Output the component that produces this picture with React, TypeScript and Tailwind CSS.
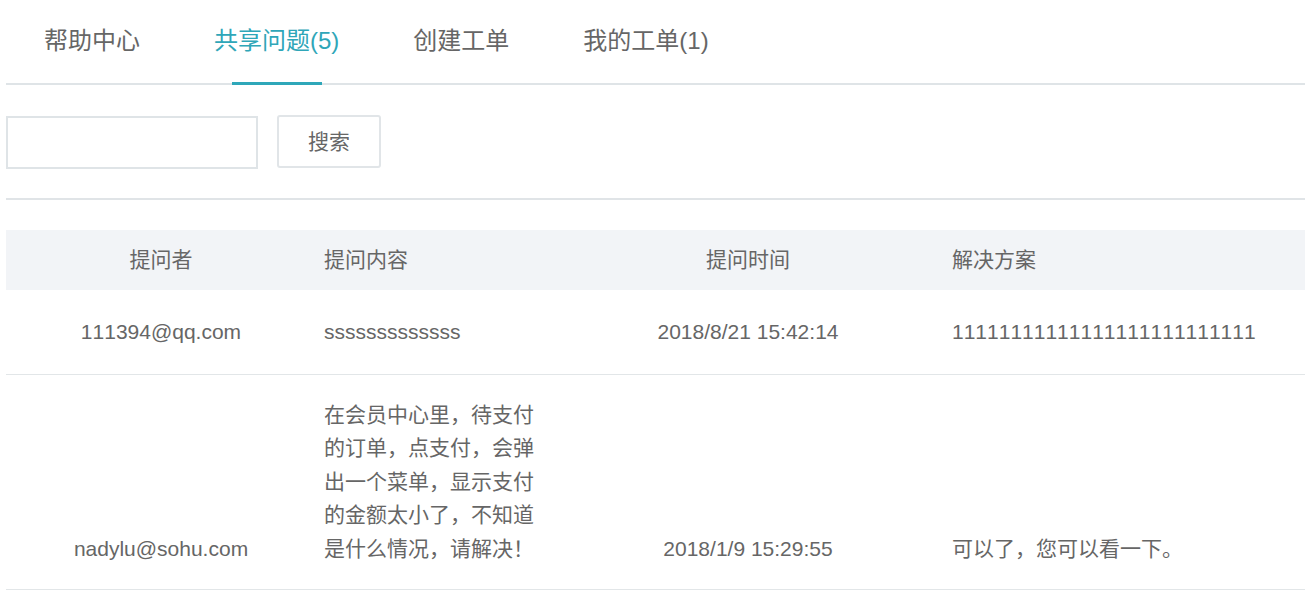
import { useState } from "react";

type Row = {
  user: string;
  content: string;
  time: string;
  solution: string;
};

const tabs = ["帮助中心", "共享问题(5)", "创建工单", "我的工单(1)"];

const rows: Row[] = [
  {
    user: "111394@qq.com",
    content: "sssssssssssss",
    time: "2018/8/21 15:42:14",
    solution: "11111111111111111111111111",
  },
  {
    user: "nadylu@sohu.com",
    content: "在会员中心里，待支付的订单，点支付，会弹出一个菜单，显示支付的金额太小了，不知道是什么情况，请解决！",
    time: "2018/1/9 15:29:55",
    solution: "可以了，您可以看一下。",
  },
];

export default function App() {
  const [active, setActive] = useState(1);
  const [keyword, setKeyword] = useState("");

  return (
    <div className="min-h-screen bg-white pl-[6px] font-['Liberation_Sans','Noto_Sans_CJK_SC',sans-serif] text-[#666] [font-kerning:none]">
      <div className="flex h-[85px] border-b-2 border-[#dfe4e7] pl-[1px]">
        {tabs.map((t, i) => (
          <button
            key={t}
            onClick={() => setActive(i)}
            className={
              "relative flex items-center px-[37px] pb-[2px] text-[24px] " +
              (i === active ? "text-[#2fa6b8]" : "text-[#666]")
            }
          >
            {t}
            {i === active && (
              <span className="absolute bottom-[-2px] left-1/2 h-[3px] w-[90px] -translate-x-1/2 bg-[#2ea7b9]" />
            )}
          </button>
        ))}
      </div>

      <div className="flex items-start pt-[30px]">
        <input
          value={keyword}
          onChange={(e) => setKeyword(e.target.value)}
          className="mt-[1px] h-[53px] w-[252px] border-2 border-[#dfe4e7] px-3 text-[20px] outline-none"
        />
        <button className="ml-[19px] h-[53px] w-[104px] rounded-[3px] border-2 border-[#e1e5e8] text-[21px] text-[#666]">
          搜索
        </button>
      </div>

      <div className="mt-[29px] border-t-2 border-[#e0e4e7]" />

      <div className="mt-[30px] grid h-[60px] grid-cols-[310px_236px_392px_1fr] items-center bg-[#f2f4f7] text-[21px]">
        <div className="text-center">提问者</div>
        <div className="pl-[8px]">提问内容</div>
        <div className="text-center">提问时间</div>
        <div className="pl-[8px]">解决方案</div>
      </div>

      {rows.map((r, i) => (
        <div
          key={r.user}
          className={
            "grid grid-cols-[310px_236px_392px_1fr] items-end border-b border-[#e2e6e8] text-[21px] leading-[33.5px] " +
            (i === 0 ? "py-[25px]" : "pt-[23px] pb-[24px]")
          }
        >
          <div className="text-center">{r.user}</div>
          <div className="pl-[8px]">
            <div className="max-w-[216px]">{r.content}</div>
          </div>
          <div className="text-center">{r.time}</div>
          <div className="pl-[8px]">{r.solution}</div>
        </div>
      ))}
    </div>
  );
}
